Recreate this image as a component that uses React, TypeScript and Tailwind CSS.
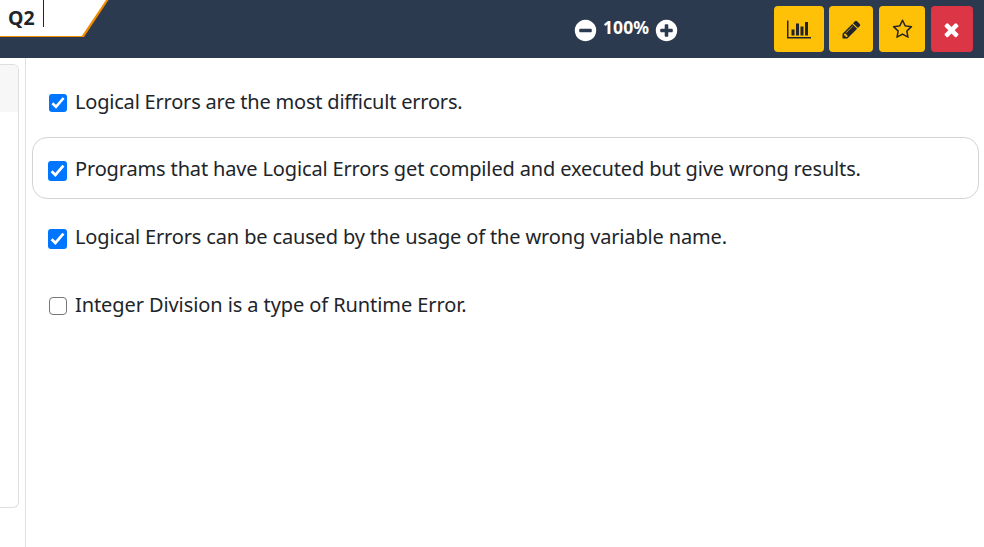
import React from "react";

const CIRCLE =
  "M1664 896q0 209-103 385.5t-279.5 279.5-385.5 103-385.5-103-279.5-279.5-103-385.5 103-385.5 279.5-279.5 385.5-103 385.5 103 279.5 279.5 103 385.5z";

const ICONS = {
  minus:
    "M1344 960v-128q0-26-19-45t-45-19h-768q-26 0-45 19t-19 45v128q0 26 19 45t45 19h768q26 0 45-19t19-45z" + CIRCLE,
  plus:
    "M1344 960v-128q0-26-19-45t-45-19h-256v-256q0-26-19-45t-45-19h-128q-26 0-45 19t-19 45v256h-256q-26 0-45 19t-19 45v128q0 26 19 45t45 19h256v256q0 26 19 45t45 19h128q26 0 45-19t19-45v-256h256q26 0 45-19t19-45z" +
    CIRCLE,
  chart:
    "M640 896v512h-256v-512h256zm384-512v1024h-256v-1024h256zm1024 1152v128h-2048v-1536h128v1408h1920zm-640-896v768h-256v-768h256zm384-384v1152h-256v-1152h256z",
  pencil:
    "M491 1536l91-91-235-235-91 91v107h128v128h107zm523-928q0-22-22-22-10 0-17 7l-542 542q-7 7-7 17 0 22 22 22 10 0 17-7l542-542q7-7 7-17zm-54-192l416 416-832 832h-416v-416zm683 96q0 53-37 90l-166 166-416-416 166-165q36-38 90-38 53 0 91 38l235 234q37 39 37 91z",
  star:
    "M1201 1004l306-297-422-62-189-382-189 382-422 62 306 297-73 421 378-199 377 199zm527-357q0 22-26 48l-363 354 86 500q1 7 1 20 0 50-41 50-19 0-40-12l-449-236-449 236q-22 12-40 12-21 0-31.5-14.5t-10.5-35.5q0-6 2-20l86-500-364-354q-25-27-25-48 0-37 56-46l502-73 225-455q19-41 49-41t49 41l225 455 502 73q56 9 56 46z",
  times:
    "M1490 1322q0 40-28 68l-136 136q-28 28-68 28t-68-28l-294-294-294 294q-28 28-68 28t-68-28l-136-136q-28-28-28-68t28-68l294-294-294-294q-28-28-28-68t28-68l136-136q28-28 68-28t68 28l294 294 294-294q28-28 68-28t68 28l136 136q28 28 28 68t-28 68l-294 294 294 294q28 28 28 68z",
};

function Icon({ name, className, viewBox = "0 0 1792 1792" }: { name: keyof typeof ICONS; className: string; viewBox?: string }) {
  return (
    <svg viewBox={viewBox} className={className} fill="currentColor" fillRule="evenodd" aria-hidden="true">
      <path d={ICONS[name]} />
    </svg>
  );
}

function Checkbox({ checked, large }: { checked: boolean; large?: boolean }) {
  if (!checked) {
    return <span role="checkbox" aria-checked="false" className="mt-[3px] ml-px size-[18px] shrink-0 rounded-[4px] border-[1.5px] border-[#767676] bg-white" />;
  }
  return (
    <span
      role="checkbox"
      aria-checked="true"
      className={large ? "mt-[3px] h-[20px] w-[19px] shrink-0 rounded-[3px] bg-[#0075ff]" : "mt-[3px] ml-px size-[18px] shrink-0 rounded-[3px] bg-[#0075ff]"}
    >
      <svg viewBox="0 0 18 18" className="block size-full" fill="none" stroke="white" strokeWidth="2.6">
        <path d="M3.4 9.3L7 12.8L14.6 4" />
      </svg>
    </span>
  );
}

const ANSWERS = [
  { text: "Logical Errors are the most difficult errors.", checked: true, large: false, row: "pt-[19px] border-transparent", spacing: "tracking-[-0.205px]" },
  { text: "Programs that have Logical Errors get compiled and executed but give wrong results.", checked: true, large: true, row: "pt-[18px] border-[#d3d3d3]", spacing: "tracking-[-0.15px]" },
  { text: "Logical Errors can be caused by the usage of the wrong variable name.", checked: true, large: true, row: "pt-[18px] border-transparent", spacing: "tracking-[-0.15px]" },
  { text: "Integer Division is a type of Runtime Error.", checked: false, large: false, row: "pt-[18px] border-transparent", spacing: "tracking-[-0.09px]" },
];

export default function App() {
  return (
    <div className="flex h-[547px] w-[984px] flex-col overflow-hidden bg-white font-['Noto_Sans','Open_Sans',sans-serif] text-[#212529]">
      <header className="flex h-[58px] shrink-0 bg-[#2c3a50]">
        <div className="relative h-[38px] w-[110px] shrink-0">
          <svg viewBox="0 0 110 38" className="absolute inset-0 size-full" aria-hidden="true">
            <path d="M0 0H108.5L84 37H0Z" fill="#f28a00" />
            <path d="M0 0H106L81.8 36H0Z" fill="white" />
          </svg>
          <div className="relative flex h-[27px] w-11 border-r border-[#212529] pl-2 text-[19.5px] leading-[35px] font-bold whitespace-nowrap">Q2</div>
        </div>
        <div className="ml-[463px] flex w-[106px] shrink-0 items-start text-white">
          <Icon name="minus" className="mt-[18px] size-[25px] shrink-0" />
          <span className="ml-[5px] w-[47px] pt-[13px] text-[17.5px] leading-[28px] font-bold tracking-[0.1px]">100%</span>
          <Icon name="plus" className="mt-[18px] ml-[4px] size-[25px] shrink-0" />
        </div>
        <div className="mt-[6px] ml-auto flex h-[46px] gap-[5px] pr-[11px]">
          <button aria-label="Statistics" className="flex w-[50px] items-center justify-center rounded-[4px] bg-[#ffc107]">
            <Icon name="chart" viewBox="0 0 2048 1792" className="h-[21px] w-[24px]" />
          </button>
          <button aria-label="Edit" className="flex w-[44px] items-center justify-center rounded-[4px] bg-[#ffc107]">
            <Icon name="pencil" className="size-[21px]" />
          </button>
          <button aria-label="Favourite" className="ml-px flex w-[46px] items-center justify-center rounded-[4px] bg-[#ffc107]">
            <Icon name="star" className="size-[21px]" />
          </button>
          <button aria-label="Close" className="ml-px flex w-[42px] items-center justify-center rounded-[4px] bg-[#dc3545] pr-px text-white">
            <Icon name="times" className="size-[21px]" />
          </button>
        </div>
      </header>
      <main className="flex min-h-0 flex-1">
        <aside className="w-[26px] shrink-0 border-r border-[#dee2e6] pt-[6px]">
          <div className="h-[444px] w-[19px] overflow-hidden rounded-r-[6px] border-y border-r border-[#dfdfdf]">
            <div className="h-[47px] bg-[#f7f7f7]" />
          </div>
        </aside>
        <div className="flex flex-1 flex-col gap-[6px] pt-[11px] pr-[5px] pl-[6px]">
          {ANSWERS.map((a) => (
            <label key={a.text} className={`flex h-[62px] items-start rounded-[15px] border pl-[15px] ${a.row}`}>
              <span className="mt-[2px] flex w-[27px] shrink-0">
                <Checkbox checked={a.checked} large={a.large} />
              </span>
              <span className={`text-[20px] leading-[26px] whitespace-nowrap ${a.spacing}`}>{a.text}</span>
            </label>
          ))}
        </div>
      </main>
    </div>
  );
}
